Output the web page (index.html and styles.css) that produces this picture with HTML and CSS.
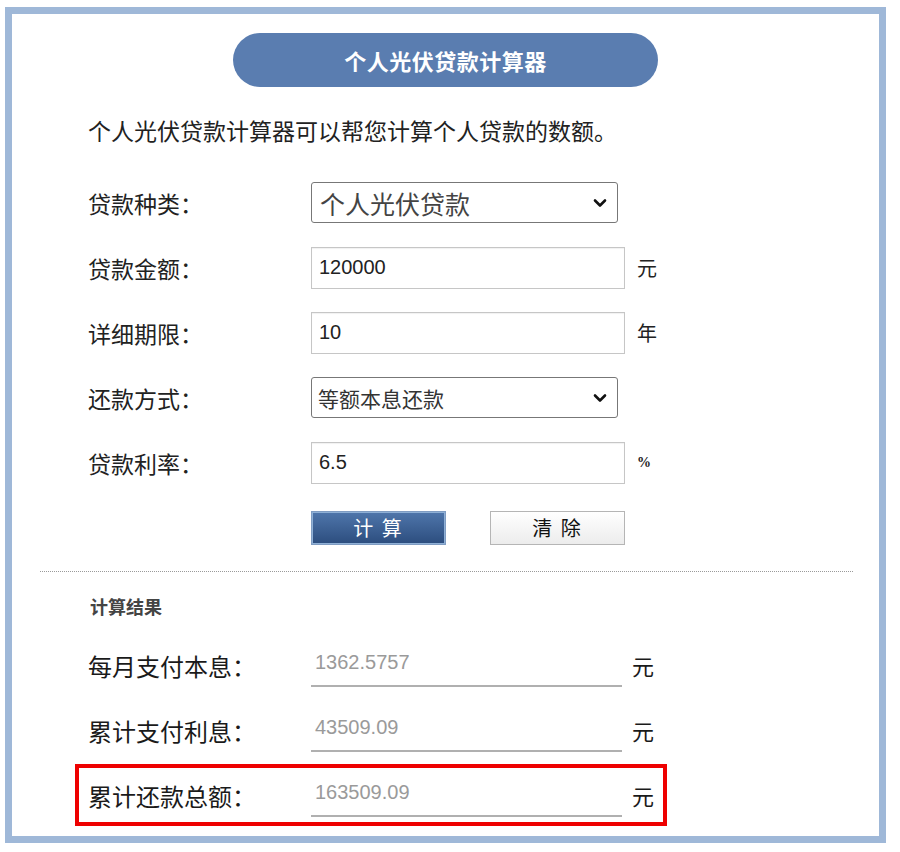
FILE: index.html
```html
<!DOCTYPE html>
<html lang="zh-CN">
<head>
<meta charset="utf-8">
<title>个人光伏贷款计算器</title>
<link rel="stylesheet" href="styles.css">
</head>
<body>
<div class="frame">
  <div class="pill">个人光伏贷款计算器</div>
  <p class="desc">个人光伏贷款计算器可以帮您计算个人贷款的数额。</p>

  <div class="form">
    <div class="row">
      <label class="label">贷款种类：</label>
      <div class="sel-wrap">
        <select class="sel sel-big"><option>个人光伏贷款</option></select>
        <svg class="chev" width="14" height="10" viewBox="0 0 14 10"><path d="M2 2.5 L7 7.5 L12 2.5" fill="none" stroke="#111" stroke-width="2.6" stroke-linecap="round" stroke-linejoin="round"/></svg>
      </div>
    </div>
    <div class="row">
      <label class="label">贷款金额：</label>
      <input class="inp" type="text" value="120000">
      <span class="unit">元</span>
    </div>
    <div class="row">
      <label class="label">详细期限：</label>
      <input class="inp" type="text" value="10">
      <span class="unit">年</span>
    </div>
    <div class="row">
      <label class="label">还款方式：</label>
      <div class="sel-wrap">
        <select class="sel"><option>等额本息还款</option></select>
        <svg class="chev" width="14" height="10" viewBox="0 0 14 10"><path d="M2 2.5 L7 7.5 L12 2.5" fill="none" stroke="#111" stroke-width="2.6" stroke-linecap="round" stroke-linejoin="round"/></svg>
      </div>
    </div>
    <div class="row">
      <label class="label">贷款利率：</label>
      <input class="inp" type="text" value="6.5">
      <span class="unit unit-pct">%</span>
    </div>
    <div class="row btn-row">
      <button class="btn btn-calc">计 算</button>
      <button class="btn btn-clear">清 除</button>
    </div>
  </div>

  <div class="divider"></div>

  <div class="res-title">计算结果</div>

  <div class="results">
    <div class="res-row">
      <span class="res-label">每月支付本息：</span>
      <span class="res-val">1362.5757</span>
      <span class="res-unit">元</span>
    </div>
    <div class="res-row">
      <span class="res-label">累计支付利息：</span>
      <span class="res-val">43509.09</span>
      <span class="res-unit">元</span>
    </div>
    <div class="res-row res-hl">
      <span class="res-label">累计还款总额：</span>
      <span class="res-val">163509.09</span>
      <span class="res-unit">元</span>
    </div>
  </div>
</div>
</body>
</html>
```
FILE: styles.css
```css
* { box-sizing: border-box; }
html, body {
  margin: 0;
  padding: 0;
  background: #ffffff;
}
body {
  font-family: "Noto Sans CJK SC", "Liberation Sans", sans-serif;
  color: #1e1e1e;
  width: 900px;
  height: 852px;
  overflow: hidden;
}
.frame {
  margin: 7px 0 0 5px;
  width: 881px;
  height: 836px;
  border: 7px solid #9fb8d8;
  background: #fff;
  display: flex;
  flex-direction: column;
}
.pill {
  align-self: center;
  margin-top: 19px;
  width: 425px;
  height: 54px;
  border-radius: 27px;
  background: #5a7db0;
  color: #fff;
  font-size: 22px;
  font-weight: 700;
  display: flex;
  align-items: center;
  justify-content: center;
  letter-spacing: 0.5px;
}
.desc {
  margin: 28px 0 0 76px;
  font-size: 23px;
  line-height: 30px;
  color: #222;
}
.form {
  margin: 25px 0 0 76px;
  display: flex;
  flex-direction: column;
}
.row {
  height: 65px;
  display: flex;
  align-items: center;
}
.label {
  width: 223px;
  font-size: 23px;
  color: #222;
}
.sel-wrap {
  position: relative;
  width: 307px;
  height: 41px;
}
.sel {
  -webkit-appearance: none;
  appearance: none;
  width: 100%;
  height: 100%;
  border: 1px solid #777;
  border-radius: 3px;
  background: #fff;
  padding: 0 30px 0 6px;
  font-family: "Noto Sans CJK SC", sans-serif;
  font-size: 21px;
  color: #333;
}
.sel-big {
  font-size: 25px;
  padding-left: 8px;
  color: #444;
}
.chev {
  position: absolute;
  right: 11px;
  top: 16px;
  pointer-events: none;
}
.inp {
  width: 314px;
  height: 42px;
  border: 1px solid #c6c6c6;
  box-shadow: inset 0 1px 1px rgba(0,0,0,0.06);
  padding: 0 7px;
  font-family: "Liberation Sans", sans-serif;
  font-size: 20px;
  color: #222;
  background: #fff;
}
.unit {
  margin-left: 12px;
  font-size: 20px;
  color: #222;
}
.unit-pct {
  font-size: 14px;
  font-weight: 700;
  font-family: "Liberation Serif", serif;
}
.btn-row {
  padding-left: 223px;
  gap: 44px;
}
.btn {
  width: 135px;
  height: 34px;
  font-family: "Noto Sans CJK SC", sans-serif;
  font-size: 20px;
  line-height: 1;
  padding: 0;
  cursor: pointer;
}
.btn-calc {
  color: #fff;
  background: linear-gradient(#4f76ab, #2c4d7e);
  border: 1px solid #7f9cc2;
  box-shadow: inset 0 0 0 1px #8fb0d6;
  letter-spacing: 2px;
}
.btn-clear {
  color: #111;
  background: linear-gradient(#ffffff, #ececec);
  border: 1px solid #b5b5b5;
  letter-spacing: 2px;
}
.divider {
  margin: 11px 26px 0 28px;
  border-top: 1px dotted #9a9a9a;
}
.res-title {
  margin: 22px 0 0 78px;
  font-size: 18px;
  line-height: 24px;
  font-weight: 700;
  color: #444;
}
.results {
  margin: 16px 0 0 63px;
  display: flex;
  flex-direction: column;
  gap: 3px;
}
.res-row {
  width: 592px;
  height: 62px;
  border: 4px solid transparent;
  padding-left: 9px;
  display: flex;
  align-items: center;
}
.res-hl {
  border-color: #ee0000;
}
.res-label {
  width: 223px;
  font-size: 24px;
  color: #1a1a1a;
}
.res-val {
  width: 311px;
  height: 44px;
  border-bottom: 2px solid #b0b0b0;
  padding-left: 4px;
  font-family: "Liberation Sans", sans-serif;
  font-size: 20px;
  line-height: 38px;
  color: #9a9a9a;
}
.res-unit {
  margin-left: 10px;
  font-size: 22px;
  color: #1a1a1a;
}
```
